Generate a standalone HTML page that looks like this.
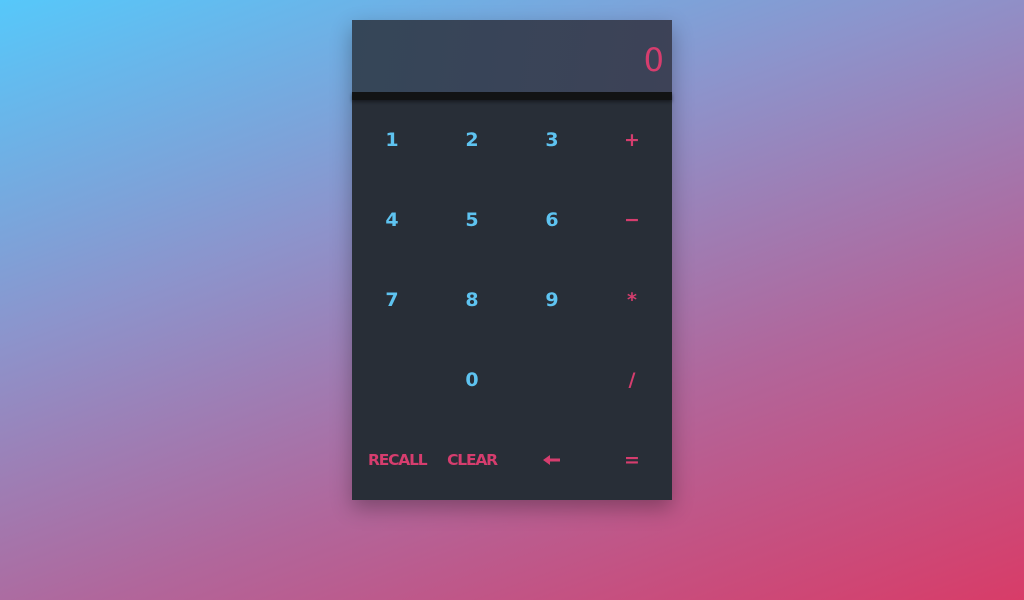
<!DOCTYPE html>
<html><head><style>
html,body{margin:0;padding:0;width:1024px;height:600px;overflow:hidden}
body{background:linear-gradient(160deg,#56c8fa 0%,#8c94cc 35%,#b0679c 65%,#d83c68 100%);font-family:"DejaVu Sans","Liberation Sans",sans-serif}
.calc{position:absolute;left:352px;top:20px;width:320px;height:480px;background:#282e37;box-shadow:0 8px 20px rgba(0,0,0,.3)}
.disp{height:72px;background:linear-gradient(100deg,#354658,#3d4257);position:relative}
.disp span{position:absolute;right:8px;top:24px;font-size:32px;color:#d63d6e;line-height:1}
.bar{height:8px;background:#121314;box-shadow:0 2px 3px rgba(0,0,0,.4)}
.grid{display:grid;grid-template-columns:repeat(4,80px);grid-template-rows:repeat(5,80px)}
.grid div{display:flex;align-items:center;justify-content:center;font-size:19px;color:#5ec3f0;font-weight:600}
.grid .p{color:#d63d6e}
.grid .s{font-size:15.5px;font-weight:600;letter-spacing:-1.2px}
</style></head><body>
<div class="calc">
<div class="disp"><span>0</span></div>
<div class="bar"></div>
<div class="grid">
<div>1</div><div>2</div><div>3</div><div class="p">+</div>
<div>4</div><div>5</div><div>6</div><div class="p">−</div>
<div>7</div><div>8</div><div>9</div><div class="p">*</div>
<div></div><div>0</div><div></div><div class="p">/</div>
<div class="p s" style="justify-content:flex-start;padding-left:16px">RECALL</div><div class="p s">CLEAR</div><div class="p"><svg width="18" height="12" viewBox="0 0 18 12"><path d="M0 6 L7 1 L7 4.5 L17 4.5 L17 7.5 L7 7.5 L7 11 Z" fill="#d63d6e"/></svg></div><div class="p">=</div>
</div>
</div>
</body></html>
